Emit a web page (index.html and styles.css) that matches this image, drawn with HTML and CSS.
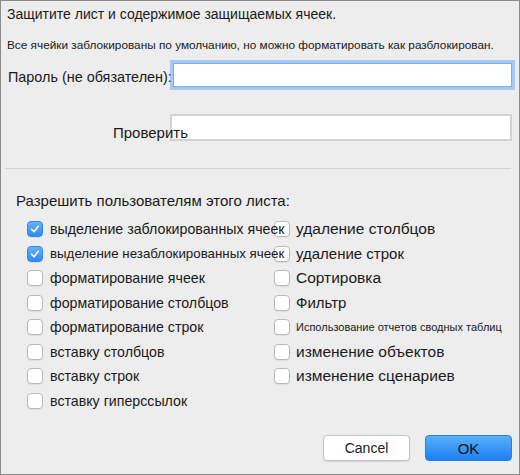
FILE: index.html
```html
<!DOCTYPE html>
<html lang="ru">
<head>
    <meta charset="UTF-8">
    <title>Защитить лист</title>
    <link rel="stylesheet" href="styles.css">
</head>
<body>
    <div class="dialog">
        <h1 class="title">Защитите лист и содержимое защищаемых ячеек.</h1>
        <p class="note">Все ячейки заблокированы по умолчанию, но можно форматировать как разблокирован.</p>

        <div class="form-row">
            <label class="form-label" for="password">Пароль (не обязателен):</label>
            <input type="password" id="password" class="text-input focused">
        </div>
        <div class="form-row verify-row">
            <label class="form-label verify-label" for="verify">Проверить</label>
            <input type="password" id="verify" class="text-input">
        </div>

        <div class="separator"></div>

        <div class="allow-title">Разрешить пользователям этого листа:</div>

        <div class="options">
            <div class="col col-left">
                <div class="opt"><span class="box checked"><svg viewBox="0 0 16 16"><path d="M4.2 8.4 L6.9 11.1 L11.8 4.9" fill="none" stroke="#fff" stroke-width="1.7" stroke-linecap="round" stroke-linejoin="round"/></svg></span>выделение заблокированных ячеек</div>
                <div class="opt narrow"><span class="box checked"><svg viewBox="0 0 16 16"><path d="M4.2 8.4 L6.9 11.1 L11.8 4.9" fill="none" stroke="#fff" stroke-width="1.7" stroke-linecap="round" stroke-linejoin="round"/></svg></span>выделение незаблокированных ячеек</div>
                <div class="opt"><span class="box"></span>форматирование ячеек</div>
                <div class="opt"><span class="box"></span>форматирование столбцов</div>
                <div class="opt"><span class="box"></span>форматирование строк</div>
                <div class="opt"><span class="box"></span>вставку столбцов</div>
                <div class="opt"><span class="box"></span>вставку строк</div>
                <div class="opt"><span class="box"></span>вставку гиперссылок</div>
            </div>
            <div class="col col-right">
                <div class="opt big"><span class="box"></span>удаление столбцов</div>
                <div class="opt"><span class="box"></span>удаление строк</div>
                <div class="opt big"><span class="box"></span>Сортировка</div>
                <div class="opt"><span class="box"></span>Фильтр</div>
                <div class="opt tiny"><span class="box"></span>Использование отчетов сводных таблиц</div>
                <div class="opt big"><span class="box"></span>изменение объектов</div>
                <div class="opt big"><span class="box"></span>изменение сценариев</div>
            </div>
        </div>

        <div class="buttons">
            <button class="btn cancel">Cancel</button>
            <button class="btn ok">OK</button>
        </div>
    </div>
</body>
</html>
```

FILE: styles.css
```css
html, body {
    margin: 0;
    padding: 0;
    background: #ededed;
}
.dialog {
    box-sizing: border-box;
    width: 520px;
    height: 475px;
    border: 1px solid #8a8a8a;
    background: #ededed;
    padding: 0 7px 0 6px;
    font-family: "Liberation Sans", Arial, sans-serif;
    color: #1a1a1a;
    display: flex;
    flex-direction: column;
}
.title {
    margin: 4px 0 0;
    font-size: 14px;
    font-weight: normal;
    line-height: 18px;
}
.note {
    margin: 15px 0 0;
    font-size: 11.8px;
    line-height: 14px;
}
.form-row {
    display: grid;
    grid-template-columns: 163px 1fr;
    align-items: center;
    margin-top: 11px;
}
.form-label {
    position: relative;
    z-index: 1;
    font-size: 14.4px;
    white-space: nowrap;
    padding-left: 1px;
    padding-top: 3px;
}
.text-input {
    box-sizing: border-box;
    height: 24px;
    margin: 0 0 0 3px;
    border: 1px solid #cfcfcf;
    background: #fff;
    outline: none;
    padding: 0 4px;
}
.text-input.focused {
    border-color: #7eaee8;
    box-shadow: 0 0 0 3px #a6c9f3;
}
.verify-row {
    margin-top: 26px;
}
.verify-row .text-input {
    height: 27px;
    margin-left: 0;
    border: 2px solid #d2d2d2;
    width: 342px;
}
.verify-label {
    padding-left: 106px;
    padding-top: 11px;
    font-size: 15px;
}
.separator {
    height: 1px;
    background: #d3d3d3;
    margin: 27px 1px 0 -2px;
}
.allow-title {
    font-size: 15px;
    margin: 23px 0 0 9px;
    line-height: 18px;
}
.options {
    display: flex;
    margin: 7px 0 0 20px;
}
.col {
    display: flex;
    flex-direction: column;
}
.col-left {
    width: 247px;
    position: relative;
    z-index: 1;
}
.opt {
    display: flex;
    align-items: center;
    height: 24.5px;
    gap: 7px;
    font-size: 14.2px;
    white-space: nowrap;
}
.opt.narrow {
    font-size: 13.3px;
}
.col-right .opt {
    gap: 6px;
    font-size: 15px;
}
.col-right .opt.big {
    font-size: 15.5px;
}
.col-right .opt.tiny {
    font-size: 11px;
}
.box {
    box-sizing: border-box;
    flex: none;
    width: 16px;
    height: 16px;
    border: 1px solid #b9b9b9;
    border-radius: 4px;
    background: #fff;
    box-shadow: 0 1px 1px rgba(0, 0, 0, 0.06);
}
.box svg {
    display: block;
    width: 14px;
    height: 14px;
}
.box.checked {
    border-color: #2f86ee;
    background: linear-gradient(#69b1fb, #2e8af5);
}
.buttons {
    display: flex;
    justify-content: flex-end;
    gap: 15px;
    margin-top: auto;
    margin-bottom: 13px;
}
.btn {
    box-sizing: border-box;
    height: 26px;
    width: 87px;
    font-family: "Liberation Sans", Arial, sans-serif;
    font-size: 14px;
    color: #222;
    border-radius: 4px;
    cursor: pointer;
}
.cancel {
    background: #fff;
    border: 1px solid #c3c3c3;
    box-shadow: 0 1px 1px rgba(0, 0, 0, 0.1);
}
.ok {
    background: linear-gradient(#5aaefc, #1b80f6);
    border: 1px solid #2a7ee6;
    color: #111;
    font-size: 15px;
}
```
